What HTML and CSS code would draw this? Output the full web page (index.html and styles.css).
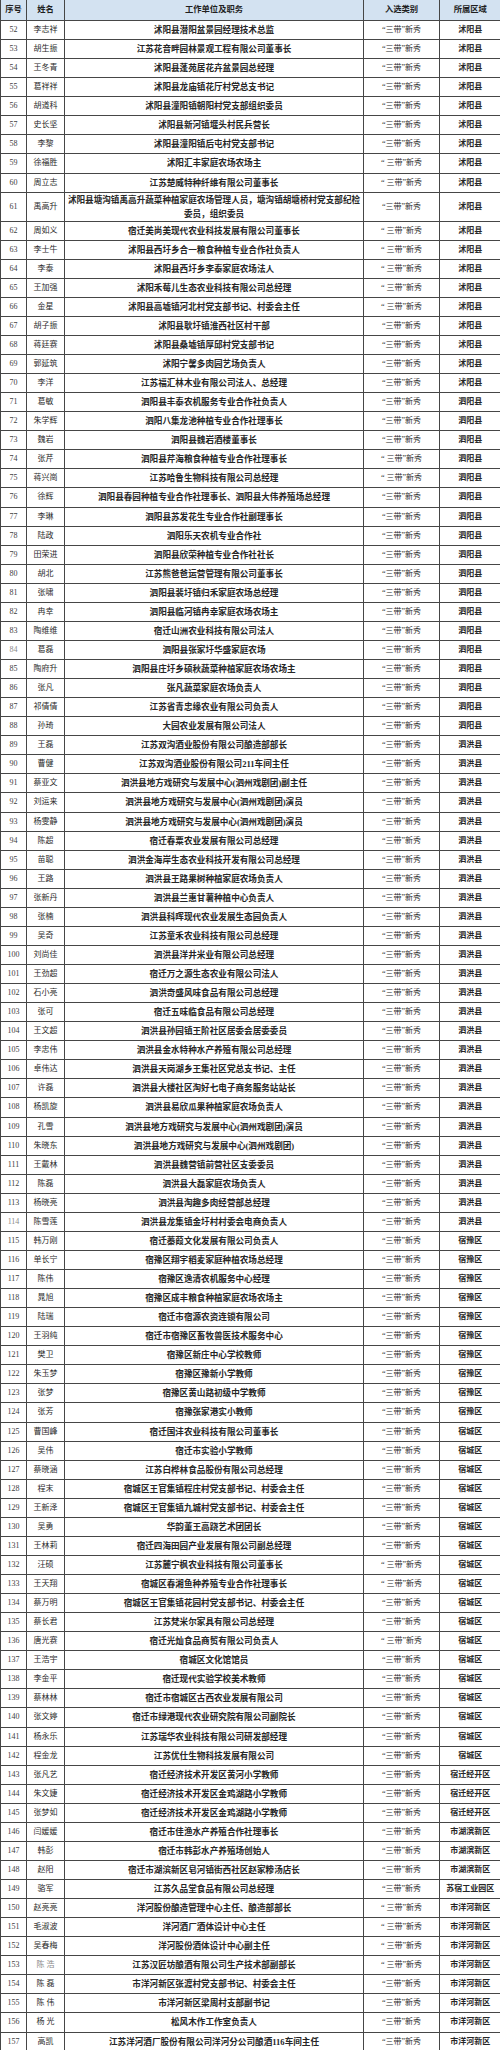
FILE: index.html
```html
<!DOCTYPE html>
<html lang="zh-CN">
<head>
<meta charset="utf-8">
<title>名单</title>
<link rel="stylesheet" href="styles.css">
</head>
<body>
<table class="roster">
<colgroup>
<col class="c-no"><col class="c-name"><col class="c-unit"><col class="c-cat"><col class="c-area">
</colgroup>
<thead>
<tr><th>序号</th><th>姓名</th><th>工作单位及职务</th><th>入选类别</th><th>所属区域</th></tr>
</thead>
<tbody>
<tr><td class="no">52</td><td class="name">李志祥</td><td class="unit">沭阳县潜阳盆景园经理技术总监</td><td class="cat">“三带”新秀</td><td class="area">沭阳县</td></tr>
<tr><td class="no">53</td><td class="name">胡生振</td><td class="unit">江苏花音畔园林景观工程有限公司董事长</td><td class="cat">“三带”新秀</td><td class="area">沭阳县</td></tr>
<tr><td class="no">54</td><td class="name">王冬青</td><td class="unit">沭阳县蓬苑居花卉盆景园总经理</td><td class="cat">“三带”新秀</td><td class="area">沭阳县</td></tr>
<tr><td class="no">55</td><td class="name">葛祥祥</td><td class="unit">沭阳县龙庙镇花厅村党总支书记</td><td class="cat">“三带”新秀</td><td class="area">沭阳县</td></tr>
<tr><td class="no">56</td><td class="name">胡道科</td><td class="unit">沭阳县潼阳镇朝阳村党支部组织委员</td><td class="cat">“三带”新秀</td><td class="area">沭阳县</td></tr>
<tr><td class="no">57</td><td class="name">史长坚</td><td class="unit">沭阳县新河镇堰头村民兵营长</td><td class="cat">“三带”新秀</td><td class="area">沭阳县</td></tr>
<tr><td class="no">58</td><td class="name">李黎</td><td class="unit">沭阳县潼阳镇后屯村党支部书记</td><td class="cat">“三带”新秀</td><td class="area">沭阳县</td></tr>
<tr><td class="no">59</td><td class="name">徐福胜</td><td class="unit">沭阳汇丰家庭农场农场主</td><td class="cat">“ 三带”新秀</td><td class="area">沭阳县</td></tr>
<tr><td class="no">60</td><td class="name">周立志</td><td class="unit">江苏楚威特种纤维有限公司董事长</td><td class="cat">“ 三带”新秀</td><td class="area">沭阳县</td></tr>
<tr><td class="no">61</td><td class="name">禹高升</td><td class="unit multi">沭阳县塘沟镇禹高升蔬菜种植家庭农场管理人员，塘沟镇胡塘桥村党支部纪检<br>委员，组织委员</td><td class="cat">“三带”新秀</td><td class="area">沭阳县</td></tr>
<tr><td class="no">62</td><td class="name">周如义</td><td class="unit">宿迁美尚美现代农业科技发展有限公司董事长</td><td class="cat">“ 三带”新秀</td><td class="area">沭阳县</td></tr>
<tr><td class="no">63</td><td class="name">李士牛</td><td class="unit">沭阳县西圩乡合一粮食种植专业合作社负责人</td><td class="cat">“ 三带”新秀</td><td class="area">沭阳县</td></tr>
<tr><td class="no">64</td><td class="name">李泰</td><td class="unit">沭阳县西圩乡李泰家庭农场法人</td><td class="cat">“ 三带”新秀</td><td class="area">沭阳县</td></tr>
<tr><td class="no">65</td><td class="name">王加强</td><td class="unit">沭阳禾莓儿生态农业科技有限公司总经理</td><td class="cat">“ 三带”新秀</td><td class="area">沭阳县</td></tr>
<tr><td class="no">66</td><td class="name">金星</td><td class="unit">沭阳县高墟镇河北村党支部书记、村委会主任</td><td class="cat">“ 三带”新秀</td><td class="area">沭阳县</td></tr>
<tr><td class="no">67</td><td class="name">胡子振</td><td class="unit">沭阳县耿圩镇淮西社区村干部</td><td class="cat">“三带”新秀</td><td class="area">沭阳县</td></tr>
<tr><td class="no">68</td><td class="name">蒋廷赛</td><td class="unit">沭阳县桑墟镇厚邱村党支部书记</td><td class="cat">“三带”新秀</td><td class="area">沭阳县</td></tr>
<tr><td class="no">69</td><td class="name">郭延筑</td><td class="unit">沭阳宁馨多肉园艺场负责人</td><td class="cat">“三带”新秀</td><td class="area">沭阳县</td></tr>
<tr><td class="no">70</td><td class="name">李洋</td><td class="unit">江苏福汇林木业有限公司法人、总经理</td><td class="cat">“三带”新秀</td><td class="area">沭阳县</td></tr>
<tr><td class="no">71</td><td class="name">葛敏</td><td class="unit">泗阳县丰泰农机服务专业合作社负责人</td><td class="cat">“三带”新秀</td><td class="area">泗阳县</td></tr>
<tr><td class="no">72</td><td class="name">朱学辉</td><td class="unit">泗阳八集龙池种植专业合作社理事长</td><td class="cat">“三带”新秀</td><td class="area">泗阳县</td></tr>
<tr><td class="no">73</td><td class="name">魏岩</td><td class="unit">泗阳县魏岩酒楼董事长</td><td class="cat">“三带”新秀</td><td class="area">泗阳县</td></tr>
<tr><td class="no">74</td><td class="name">张芹</td><td class="unit">泗阳县芹海粮食种植专业合作社理事长</td><td class="cat">“ 三带”新秀</td><td class="area">泗阳县</td></tr>
<tr><td class="no">75</td><td class="name">蒋兴崗</td><td class="unit">江苏哈鲁生物科技有限公司总经理</td><td class="cat">“ 三带”新秀</td><td class="area">泗阳县</td></tr>
<tr><td class="no">76</td><td class="name">徐辉</td><td class="unit">泗阳县春园种植专业合作社理事长、泗阳县大伟养殖场总经理</td><td class="cat">“三带”新秀</td><td class="area">泗阳县</td></tr>
<tr><td class="no">77</td><td class="name">李琳</td><td class="unit">泗阳县苏发花生专业合作社副理事长</td><td class="cat">“三带”新秀</td><td class="area">泗阳县</td></tr>
<tr><td class="no">78</td><td class="name">陆政</td><td class="unit">泗阳乐天农机专业合作社</td><td class="cat">“三带”新秀</td><td class="area">泗阳县</td></tr>
<tr><td class="no">79</td><td class="name">田荣进</td><td class="unit">泗阳县欣荣种植专业合作社社长</td><td class="cat">“三带”新秀</td><td class="area">泗阳县</td></tr>
<tr><td class="no">80</td><td class="name">胡北</td><td class="unit">江苏熊爸爸运营管理有限公司董事长</td><td class="cat">“三带”新秀</td><td class="area">泗阳县</td></tr>
<tr><td class="no">81</td><td class="name">张啸</td><td class="unit">泗阳县裴圩镇归禾家庭农场总经理</td><td class="cat">“三带”新秀</td><td class="area">泗阳县</td></tr>
<tr><td class="no">82</td><td class="name">冉幸</td><td class="unit">泗阳县临河镇冉幸家庭农场农场主</td><td class="cat">“三带”新秀</td><td class="area">泗阳县</td></tr>
<tr><td class="no">83</td><td class="name">陶维维</td><td class="unit">宿迁山洲农业科技有限公司法人</td><td class="cat">“三带”新秀</td><td class="area">泗阳县</td></tr>
<tr><td class="no faded">84</td><td class="name">葛磊</td><td class="unit">泗阳县张家圩华盛家庭农场</td><td class="cat">“三带”新秀</td><td class="area">泗阳县</td></tr>
<tr><td class="no">85</td><td class="name">陶府升</td><td class="unit">泗阳县庄圩乡硕秋蔬菜种植家庭农场农场主</td><td class="cat">“三带”新秀</td><td class="area">泗阳县</td></tr>
<tr><td class="no">86</td><td class="name">张凡</td><td class="unit">张凡蔬菜家庭农场负责人</td><td class="cat">“三带”新秀</td><td class="area">泗阳县</td></tr>
<tr><td class="no">87</td><td class="name">祁倩倩</td><td class="unit">江苏省青忠缘农业有限公司负责人</td><td class="cat">“三带”新秀</td><td class="area">泗阳县</td></tr>
<tr><td class="no">88</td><td class="name">孙琦</td><td class="unit">大园农业发展有限公司法人</td><td class="cat">“三带”新秀</td><td class="area">泗阳县</td></tr>
<tr><td class="no">89</td><td class="name">王磊</td><td class="unit">江苏双沟酒业股份有限公司酿造部部长</td><td class="cat">“三带”新秀</td><td class="area">泗洪县</td></tr>
<tr><td class="no">90</td><td class="name">曹健</td><td class="unit">江苏双沟酒业股份有限公司211车间主任</td><td class="cat">“三带”新秀</td><td class="area">泗洪县</td></tr>
<tr><td class="no">91</td><td class="name">蔡亚文</td><td class="unit">泗洪县地方戏研究与发展中心(泗州戏剧团)副主任</td><td class="cat">“三带”新秀</td><td class="area">泗洪县</td></tr>
<tr><td class="no">92</td><td class="name">刘运来</td><td class="unit">泗洪县地方戏研究与发展中心(泗州戏剧团)演员</td><td class="cat">“三带”新秀</td><td class="area">泗洪县</td></tr>
<tr><td class="no">93</td><td class="name">杨雯静</td><td class="unit">泗洪县地方戏研究与发展中心(泗州戏剧团)演员</td><td class="cat">“三带”新秀</td><td class="area">泗洪县</td></tr>
<tr><td class="no">94</td><td class="name">陈超</td><td class="unit">宿迁春粟农业发展有限公司总经理</td><td class="cat">“三带”新秀</td><td class="area">泗洪县</td></tr>
<tr><td class="no">95</td><td class="name">苗聪</td><td class="unit">泗洪金海岸生态农业科技开发有限公司总经理</td><td class="cat">“三带”新秀</td><td class="area">泗洪县</td></tr>
<tr><td class="no">96</td><td class="name">王路</td><td class="unit">泗洪县王路果树种植家庭农场负责人</td><td class="cat">“三带”新秀</td><td class="area">泗洪县</td></tr>
<tr><td class="no">97</td><td class="name">张新丹</td><td class="unit">泗洪县兰惠甘薯种植中心负责人</td><td class="cat">“三带”新秀</td><td class="area">泗洪县</td></tr>
<tr><td class="no">98</td><td class="name">张楠</td><td class="unit">泗洪县科晖现代农业发展生态园负责人</td><td class="cat">“三带”新秀</td><td class="area">泗洪县</td></tr>
<tr><td class="no">99</td><td class="name">吴奇</td><td class="unit">江苏童禾农业科技有限公司总经理</td><td class="cat">“三带”新秀</td><td class="area">泗洪县</td></tr>
<tr><td class="no">100</td><td class="name">刘尚佳</td><td class="unit">泗洪县洋井米业有限公司总经理</td><td class="cat">“三带”新秀</td><td class="area">泗洪县</td></tr>
<tr><td class="no">101</td><td class="name">王劲超</td><td class="unit">宿迁万之源生态农业有限公司法人</td><td class="cat">“三带”新秀</td><td class="area">泗洪县</td></tr>
<tr><td class="no">102</td><td class="name">石小亮</td><td class="unit">泗洪奇盛风味食品有限公司总经理</td><td class="cat">“三带”新秀</td><td class="area">泗洪县</td></tr>
<tr><td class="no">103</td><td class="name">张可</td><td class="unit">宿迁五味临食品有限公司总经理</td><td class="cat">“三带”新秀</td><td class="area">泗洪县</td></tr>
<tr><td class="no">104</td><td class="name">王文超</td><td class="unit">泗洪县孙园镇王阶社区居委会居委委员</td><td class="cat">“三带”新秀</td><td class="area">泗洪县</td></tr>
<tr><td class="no">105</td><td class="name">李忠伟</td><td class="unit">泗洪县金水特种水产养殖有限公司总经理</td><td class="cat">“三带”新秀</td><td class="area">泗洪县</td></tr>
<tr><td class="no">106</td><td class="name">卓伟达</td><td class="unit">泗洪县天岗湖乡王集社区党总支书记、主任</td><td class="cat">“三带”新秀</td><td class="area">泗洪县</td></tr>
<tr><td class="no">107</td><td class="name">许磊</td><td class="unit">泗洪县大楼社区淘好七电子商务服务站站长</td><td class="cat">“三带”新秀</td><td class="area">泗洪县</td></tr>
<tr><td class="no">108</td><td class="name">杨凯旋</td><td class="unit">泗洪县易欣瓜果种植家庭农场负责人</td><td class="cat">“三带”新秀</td><td class="area">泗洪县</td></tr>
<tr><td class="no">109</td><td class="name">孔雪</td><td class="unit">泗洪县地方戏研究与发展中心(泗州戏剧团)演员</td><td class="cat">“三带”新秀</td><td class="area">泗洪县</td></tr>
<tr><td class="no">110</td><td class="name">朱晓东</td><td class="unit">泗洪县地方戏研究与发展中心(泗州戏剧团)</td><td class="cat">“三带”新秀</td><td class="area">泗洪县</td></tr>
<tr><td class="no">111</td><td class="name">王戴林</td><td class="unit">泗洪县魏营镇前营社区支委委员</td><td class="cat">“三带”新秀</td><td class="area">泗洪县</td></tr>
<tr><td class="no">112</td><td class="name">陈磊</td><td class="unit">泗洪县大磊家庭农场负责人</td><td class="cat">“三带”新秀</td><td class="area">泗洪县</td></tr>
<tr><td class="no">113</td><td class="name">杨晓亮</td><td class="unit">泗洪县淘趣多肉经营部总经理</td><td class="cat">“三带”新秀</td><td class="area">泗洪县</td></tr>
<tr><td class="no faded">114</td><td class="name">陈雪莲</td><td class="unit">泗洪县龙集镇金圩村村委会电商负责人</td><td class="cat">“三带”新秀</td><td class="area">泗洪县</td></tr>
<tr><td class="no">115</td><td class="name">韩万刚</td><td class="unit">宿迁蓁葭文化发展有限公司负责人</td><td class="cat">“三带”新秀</td><td class="area">宿豫区</td></tr>
<tr><td class="no">116</td><td class="name">单长宁</td><td class="unit">宿豫区翔宇稻麦家庭种植农场总经理</td><td class="cat">“三带”新秀</td><td class="area">宿豫区</td></tr>
<tr><td class="no">117</td><td class="name">陈伟</td><td class="unit">宿豫区逸清农机服务中心经理</td><td class="cat">“三带”新秀</td><td class="area">宿豫区</td></tr>
<tr><td class="no">118</td><td class="name">晁旭</td><td class="unit">宿豫区成丰粮食种植家庭农场农场主</td><td class="cat">“三带”新秀</td><td class="area">宿豫区</td></tr>
<tr><td class="no">119</td><td class="name">陆瑞</td><td class="unit">宿迁市宿源农资连锁有限公司</td><td class="cat">“三带”新秀</td><td class="area">宿豫区</td></tr>
<tr><td class="no">120</td><td class="name">王羽纯</td><td class="unit">宿迁市宿豫区畜牧兽医技术服务中心</td><td class="cat">“三带”新秀</td><td class="area">宿豫区</td></tr>
<tr><td class="no">121</td><td class="name">樊卫</td><td class="unit">宿豫区新庄中心学校教师</td><td class="cat">“三带”新秀</td><td class="area">宿豫区</td></tr>
<tr><td class="no">122</td><td class="name">朱玉梦</td><td class="unit">宿豫区豫新小学教师</td><td class="cat">“三带”新秀</td><td class="area">宿豫区</td></tr>
<tr><td class="no">123</td><td class="name">张梦</td><td class="unit">宿豫区黄山路初级中学教师</td><td class="cat">“三带”新秀</td><td class="area">宿豫区</td></tr>
<tr><td class="no">124</td><td class="name">张芳</td><td class="unit">宿豫张家港实小教师</td><td class="cat">“三带”新秀</td><td class="area">宿豫区</td></tr>
<tr><td class="no">125</td><td class="name">曹国峰</td><td class="unit">宿迁国沣农业科技有限公司董事长</td><td class="cat">“三带”新秀</td><td class="area">宿城区</td></tr>
<tr><td class="no">126</td><td class="name">吴伟</td><td class="unit">宿迁市实验小学教师</td><td class="cat">“三带”新秀</td><td class="area">宿城区</td></tr>
<tr><td class="no">127</td><td class="name">蔡晓涵</td><td class="unit">江苏白桦林食品股份有限公司总经理</td><td class="cat">“三带”新秀</td><td class="area">宿城区</td></tr>
<tr><td class="no">128</td><td class="name">程末</td><td class="unit">宿城区王官集镇程庄村党支部书记、村委会主任</td><td class="cat">“三带”新秀</td><td class="area">宿城区</td></tr>
<tr><td class="no">129</td><td class="name">王新泽</td><td class="unit">宿城区王官集镇九城村党支部书记、村委会主任</td><td class="cat">“三带”新秀</td><td class="area">宿城区</td></tr>
<tr><td class="no">130</td><td class="name">吴勇</td><td class="unit">华韵董王高跷艺术团团长</td><td class="cat">“三带”新秀</td><td class="area">宿城区</td></tr>
<tr><td class="no">131</td><td class="name">王林莉</td><td class="unit">宿迁四海田园产业发展有限公司副总经理</td><td class="cat">“三带”新秀</td><td class="area">宿城区</td></tr>
<tr><td class="no">132</td><td class="name">汪硕</td><td class="unit">江苏麓宁枫农业科技有限公司董事长</td><td class="cat">“ 三带”新秀</td><td class="area">宿城区</td></tr>
<tr><td class="no">133</td><td class="name">王天翔</td><td class="unit">宿城区春湘鱼种养殖专业合作社理事长</td><td class="cat">“ 三带”新秀</td><td class="area">宿城区</td></tr>
<tr><td class="no">134</td><td class="name">蔡万明</td><td class="unit">宿城区王官集镇花园村党支部书记、村委会主任</td><td class="cat">“三带”新秀</td><td class="area">宿城区</td></tr>
<tr><td class="no">135</td><td class="name">蔡长君</td><td class="unit">江苏梵米尔家具有限公司总经理</td><td class="cat">“三带”新秀</td><td class="area">宿城区</td></tr>
<tr><td class="no">136</td><td class="name">唐光赛</td><td class="unit">宿迁光灿食品商贸有限公司负责人</td><td class="cat">“ 三带”新秀</td><td class="area">宿城区</td></tr>
<tr><td class="no">137</td><td class="name">王浩宇</td><td class="unit">宿城区文化馆馆员</td><td class="cat">“三带”新秀</td><td class="area">宿城区</td></tr>
<tr><td class="no">138</td><td class="name">李金平</td><td class="unit">宿迁现代实验学校美术教师</td><td class="cat">“三带”新秀</td><td class="area">宿城区</td></tr>
<tr><td class="no">139</td><td class="name">蔡林林</td><td class="unit">宿迁市宿城区古西农业发展有限公司</td><td class="cat">“三带”新秀</td><td class="area">宿城区</td></tr>
<tr><td class="no">140</td><td class="name">张文婷</td><td class="unit">宿迁市绿港现代农业研究院有限公司副院长</td><td class="cat">“三带”新秀</td><td class="area">宿城区</td></tr>
<tr><td class="no">141</td><td class="name">杨永乐</td><td class="unit">江苏瑞华农业科技有限公司研发部经理</td><td class="cat">“三带”新秀</td><td class="area">宿城区</td></tr>
<tr><td class="no">142</td><td class="name">程金龙</td><td class="unit">江苏优仕生物科技发展有限公司</td><td class="cat">“三带”新秀</td><td class="area">宿城区</td></tr>
<tr><td class="no">143</td><td class="name">张凡艺</td><td class="unit">宿迁经济技术开发区黄河小学教师</td><td class="cat">“三带”新秀</td><td class="area">宿迁经开区</td></tr>
<tr><td class="no">144</td><td class="name">朱文婕</td><td class="unit">宿迁经济技术开发区金鸡湖路小学教师</td><td class="cat">“三带”新秀</td><td class="area">宿迁经开区</td></tr>
<tr><td class="no">145</td><td class="name">张梦如</td><td class="unit">宿迁经济技术开发区金鸡湖路小学教师</td><td class="cat">“三带”新秀</td><td class="area">宿迁经开区</td></tr>
<tr><td class="no">146</td><td class="name">闫媛媛</td><td class="unit">宿迁市佳渔水产养殖合作社理事长</td><td class="cat">“三带”新秀</td><td class="area">市湖滨新区</td></tr>
<tr><td class="no">147</td><td class="name">韩彭</td><td class="unit">宿迁市韩彭水产养殖场创始人</td><td class="cat">“三带”新秀</td><td class="area">市湖滨新区</td></tr>
<tr><td class="no">148</td><td class="name">赵阳</td><td class="unit">宿迁市湖滨新区皂河镇街西社区赵家糁汤店长</td><td class="cat">“三带”新秀</td><td class="area">市湖滨新区</td></tr>
<tr><td class="no">149</td><td class="name">骆军</td><td class="unit">江苏久品堂食品有限公司总经理</td><td class="cat">“三带”新秀</td><td class="area">苏宿工业园区</td></tr>
<tr><td class="no">150</td><td class="name">赵亮亮</td><td class="unit">洋河股份酿造管理中心主任、酿造部部长</td><td class="cat">“ 三带”新秀</td><td class="area">市洋河新区</td></tr>
<tr><td class="no">151</td><td class="name">毛淑波</td><td class="unit">洋河酒厂酒体设计中心主任</td><td class="cat">“ 三带”新秀</td><td class="area">市洋河新区</td></tr>
<tr><td class="no">152</td><td class="name">吴春梅</td><td class="unit">洋河股份酒体设计中心副主任</td><td class="cat">“ 三带”新秀</td><td class="area">市洋河新区</td></tr>
<tr><td class="no">153</td><td class="name faded">陈 浩</td><td class="unit">江苏汉匠坊酿酒有限公司生产技术部副部长</td><td class="cat">“ 三带”新秀</td><td class="area">市洋河新区</td></tr>
<tr><td class="no">154</td><td class="name">陈 磊</td><td class="unit">市洋河新区张渡村党支部书记、村委会主任</td><td class="cat">“三带”新秀</td><td class="area">市洋河新区</td></tr>
<tr><td class="no">155</td><td class="name">陈 伟</td><td class="unit">市洋河新区梁周村支部副书记</td><td class="cat">“三带”新秀</td><td class="area">市洋河新区</td></tr>
<tr><td class="no">156</td><td class="name">杨 光</td><td class="unit">松风木作工作室负责人</td><td class="cat">“三带”新秀</td><td class="area">市洋河新区</td></tr>
<tr><td class="no">157</td><td class="name">高凯</td><td class="unit">江苏洋河酒厂股份有限公司洋河分公司酿酒116车间主任</td><td class="cat">“三带”新秀</td><td class="area">市洋河新区</td></tr>
</tbody>
</table>
</body>
</html>
```

FILE: styles.css
```css
html, body {
  margin: 0;
  padding: 0;
  background: #ffffff;
}

body {
  font-family: "Liberation Serif", "Noto Sans CJK SC", serif;
  color: #2b2b2b;
}

.roster {
  border-collapse: collapse;
  table-layout: fixed;
  width: 500px;
}

.roster .c-no { width: 26px; }
.roster .c-name { width: 38px; }
.roster .c-unit { width: 299px; }
.roster .c-cat { width: 76px; }
.roster .c-area { width: 61px; }

.roster th,
.roster td {
  border: 1px solid #464646;
  padding: 0;
  text-align: center;
  vertical-align: middle;
  white-space: nowrap;
  overflow: hidden;
  font-size: 8px;
  line-height: 18.07px;
}

.roster tr > :last-child {
  border-right: none;
}

.roster thead th {
  border-top: none;
  background: #d3e2f1;
  color: #1f1f1f;
  font-weight: 700;
  font-size: 8.3px;
  line-height: 20px;
}

.roster .no {
  color: #404040;
  font-size: 8px;
}

.roster .name {
  color: #2b2b2b;
}

.roster .unit {
  font-size: 8.6px;
  font-weight: 700;
  color: #262626;
}

.roster .unit.multi {
  white-space: normal;
  line-height: 14px;
}

.roster .cat {
  color: #2b2b2b;
}

.roster .area {
  font-weight: 700;
  color: #262626;
}

.roster .faded {
  color: #8a8a8a;
}
```
